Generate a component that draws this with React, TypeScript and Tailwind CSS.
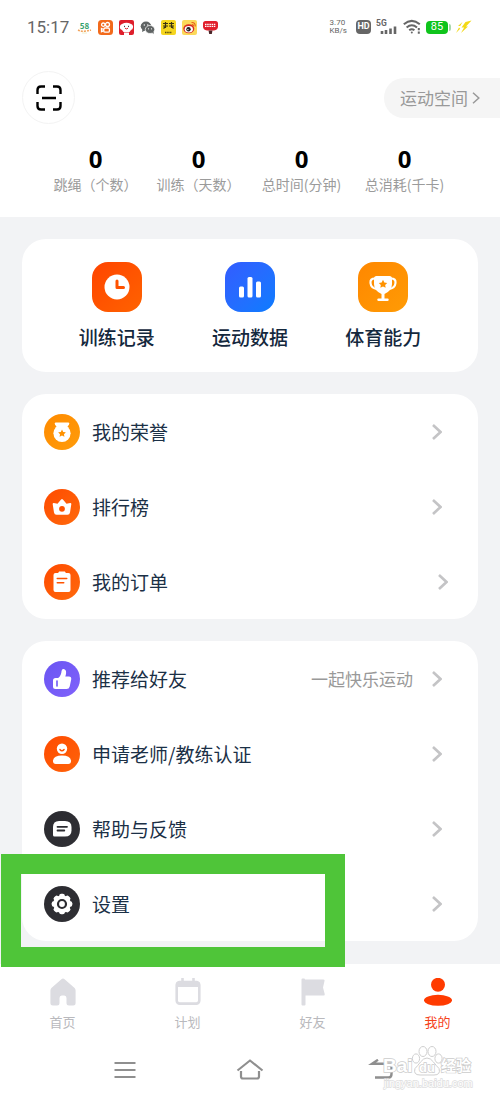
import type { ReactNode } from "react";

type RowItem = {
  label: string;
  icon: ReactNode;
  note?: string;
  inset?: string;
  marked?: boolean;
};

function Chevron() {
  return (
    <svg className="h-[18px] w-[11px] shrink-0" viewBox="0 0 11 18" fill="none" stroke="#c4c4c6" strokeWidth="2.6" aria-hidden="true">
      <path d="M2 2 9.500 9l-7.500 7" />
    </svg>
  );
}

function Disc({ from, to, id, children }: { from: string; to: string; id: string; children: ReactNode }) {
  return (
    <svg className="size-9 shrink-0" viewBox="0 0 36 36" aria-hidden="true">
      <defs>
        <linearGradient id={id} x1="0" y1="0" x2="1" y2="1">
          <stop offset="0" stopColor={from} />
          <stop offset="1" stopColor={to} />
        </linearGradient>
      </defs>
      <circle cx="18" cy="18" r="18" fill={`url(#${id})`} />
      {children}
    </svg>
  );
}

const STAR = "M0-3.5 1.1-1.2 3.5-.9 1.8.8 2.2 3.2 0 2.1-2.2 3.2-1.8.8-3.5-.9-1.1-1.2Z";

const groupOne: RowItem[] = [
  {
    label: "我的荣誉",
    icon: (
      <Disc id="honor" from="#ff8a00" to="#ff9c0a">
        <path d="M11.500 8.500h13q1.500.5.500 2l-2 3h-10l-2-3q-1-1.500.5-2Z" fill="#fff" />
        <circle cx="18" cy="19.300" r="8.600" fill="#fff" />
        <path d={STAR} transform="translate(18 19.300) scale(1.100)" fill="#ff9200" />
      </Disc>
    ),
  },
  {
    label: "排行榜",
    icon: (
      <Disc id="rank" from="#ff4a00" to="#ff6a0c">
        <path d="m9.800 14 3.700.8 3.600-4.400q.9-1 1.800 0l3.600 4.400 3.700-.8q1.300-.1 1.100 1.200l-1.300 8.300q-.4 2.300-2.500 2.300h-11q-2.100 0-2.500-2.300l-1.300-8.300q-.2-1.300 1.100-1.200Z" fill="#fff" />
        <circle cx="18" cy="19.800" r="2.900" fill="#ff5200" />
      </Disc>
    ),
  },
  {
    label: "我的订单",
    inset: "pr-[30px]",
    icon: (
      <Disc id="order" from="#ff4a00" to="#ff6a0c">
        <path d="M11.500 9h2.600l1-1.600h5.800l1 1.600h2.600q2 0 2 2v15q0 2-2 2h-13q-2 0-2-2V11q0-2 2-2Z" fill="#fff" />
        <path d="M13.300 14.500h9.400M13.300 18.700h6.400" stroke="#ff5200" strokeWidth="1.600" strokeLinecap="round" />
      </Disc>
    ),
  },
];

const groupTwo: RowItem[] = [
  {
    label: "推荐给好友",
    note: "一起快乐运动",
    icon: (
      <Disc id="recommend" from="#6a55f2" to="#8062fb">
        <path d="M11.500 17h2.700q3.100-2.500 3.300-6.800.2-2.400 2.200-2.200 2.600.4 2.400 3.800-.1 2-.8 3.700h3.500q2.900.2 2.400 3l-1.500 7q-.6 2.500-3.200 2.500h-11Q9 28 9 25.500v-6Q9 17 11.500 17Z" fill="#fff" />
        <path d="M13 20v5" stroke="#7058f5" strokeWidth="1.600" strokeLinecap="round" />
      </Disc>
    ),
  },
  {
    label: "申请老师/教练认证",
    icon: (
      <Disc id="coach" from="#ff4a00" to="#ff640a">
        <circle cx="18" cy="12.800" r="5.200" fill="#fff" />
        <path d="M15.900 13.500q2 2.600 4.200 0" stroke="#ff5200" strokeWidth="1.400" strokeLinecap="round" fill="none" />
        <path d="M9 24.600q.8-5.100 9-5.100t9 5.100q.2 3.400-2.600 3.400H11.600Q8.800 28 9 24.600Z" fill="#fff" />
      </Disc>
    ),
  },
  {
    label: "帮助与反馈",
    icon: (
      <Disc id="feedback" from="#2b2b30" to="#2f2f34">
        <path d="M15 10h6q6.500 0 6.500 6v3.500q0 6-6.500 6H10.500Q9 25.500 9 24v-8q0-6 6-6Z" fill="#fff" />
        <path d="M13.500 15.800h9.500M13.500 19.500h6.800" stroke="#2b2b30" strokeWidth="1.800" strokeLinecap="round" />
      </Disc>
    ),
  },
  {
    label: "设置",
    marked: true,
    icon: (
      <Disc id="settings" from="#2b2b30" to="#2f2f34">
        <g fill="#fff">
          <circle cx="18" cy="18" r="8.800" />
          {[0, 45, 90, 135, 180, 225, 270, 315].map((a) => (
            <rect key={a} x="15.200" y="7.700" width="5.600" height="5" rx="2" transform={`rotate(${a} 18 18)`} />
          ))}
        </g>
        <circle cx="18" cy="18" r="4" fill="none" stroke="#2b2b30" strokeWidth="2.200" />
      </Disc>
    ),
  },
];

function Group({ items }: { items: RowItem[] }) {
  return (
    <ul className="rounded-3xl bg-white">
      {items.map((item) => (
        <li key={item.label} className="relative">
          <button type="button" className={`flex h-[75px] w-full items-center pl-[22px] text-left ${item.inset ?? "pr-9"}`}>
            {item.icon}
            <span className="ml-3 flex-1 text-[19px] leading-7 text-[#1b3046]">{item.label}</span>
            {item.note && <span className="mr-[18px] text-[17px] leading-6 text-[#999]">{item.note}</span>}
            <Chevron />
          </button>
          {item.marked && (
            <span className="pointer-events-none absolute -top-3 -left-[21px] z-10 h-[113px] w-[344px] border-20 border-[#4fc539]" />
          )}
        </li>
      ))}
    </ul>
  );
}

function AppIcons() {
  return (
    <div className="flex items-center gap-1.5" aria-hidden="true">
      <svg className="size-[15px]" viewBox="0 0 15 15">
        <text x="7.500" y="8.500" textAnchor="middle" fontSize="8" fontWeight="700" fill="#32a06b">58</text>
        <path d="M1 10q3 1.500 6.500 1.200T14 10" stroke="#f2a35b" strokeWidth="1.400" fill="none" strokeDasharray="2 1" />
        <path d="M5 13h5" stroke="#eec" strokeWidth="1" />
      </svg>
      <svg className="size-[15px]" viewBox="0 0 15 15">
        <rect width="15" height="15" rx="3.500" fill="#f26a1b" />
        <g fill="none" stroke="#fff" strokeWidth="1.300">
          <circle cx="5.300" cy="4.700" r="1.700" />
          <circle cx="9.500" cy="4.500" r="2" />
          <rect x="5.800" y="8" width="5.600" height="4.200" rx="1.300" />
          <path d="m5.800 9.500-2.300-1v3.200l2.300-1" />
        </g>
      </svg>
      <svg className="size-[15px]" viewBox="0 0 15 15">
        <rect width="15" height="15" rx="2" fill="#de1f2c" />
        <path d="M3 4q4.500-2.500 9 0 2.500 1 2 3.500-.3 2-2 2.500L10.500 12h-6L3 10Q.700 9.500.800 7 .900 4.500 3 4Z" fill="#fff" />
        <path d="M5.500 5.800v1.300M9.500 5.800v1.300" stroke="#444" />
        <path d="M6 8.200q1.500 1.400 3 0" stroke="#de1f2c" fill="none" />
        <path d="M5 12.500h5V15H5Z" fill="#fff" />
      </svg>
      <svg className="size-[15px]" viewBox="0 0 15 15">
        <ellipse cx="6" cy="6.200" rx="5.300" ry="4.600" fill="#606464" />
        <path d="m2.500 9-.5 3 3-1.500Z" fill="#606464" />
        <ellipse cx="10" cy="9.500" rx="4.700" ry="4" fill="#606464" stroke="#fff" strokeWidth=".7" />
        <path d="m12 12.500 1.500 1.800.2-2.800Z" fill="#606464" />
        <g fill="#fff">
          <circle cx="4.300" cy="5" r=".7" />
          <circle cx="7.800" cy="5" r=".7" />
          <circle cx="8.500" cy="8.800" r=".6" />
          <circle cx="11.500" cy="8.800" r=".6" />
        </g>
      </svg>
      <svg className="size-[15px]" viewBox="0 0 15 15">
        <rect width="15" height="15" rx="2" fill="#f5d51f" />
        <path d="M2 3.500h5M8 3.500h5M4.500 2v6M10.500 2v6M2 6h5M8 6h5M2.500 8.500 4 7M12.500 8.500 11 7" stroke="#3a3210" strokeWidth="1.200" />
        <path d="M4 12.500h7" stroke="#5b4e10" strokeWidth="1.600" strokeDasharray="1.500 .7" />
      </svg>
      <svg className="size-[15px]" viewBox="0 0 15 15">
        <rect width="15" height="15" rx="2" fill="#fbd95b" />
        <ellipse cx="6.800" cy="8.800" rx="5.500" ry="4.500" fill="#d92b23" />
        <ellipse cx="6.800" cy="9.200" rx="4.100" ry="3.200" fill="#fff" />
        <circle cx="6.500" cy="9.300" r="2.200" fill="#222" />
        <circle cx="5.900" cy="9.600" r=".7" fill="#fff" />
        <path d="M9.500 2.500q4-.3 3.700 4M9.800 4.600q1.800-.2 1.600 1.700" stroke="#e8631c" strokeWidth="1.200" fill="none" />
      </svg>
      <svg className="size-[15px]" viewBox="0 0 15 15">
        <path d="M2.500 1h10Q15 1 15 3.500v3Q15 10 11 10.500H4Q0 10 0 6.500v-3Q0 1 2.500 1Z" fill="#e1202d" />
        <path d="M2 4.300h11M2 6.300h11" stroke="#fff" strokeWidth="1.200" strokeDasharray="1.500 .7" />
        <path d="M5.500 10.500h4L8.800 14H6.200Z" fill="#4b2528" />
      </svg>
    </div>
  );
}

function StatusBar() {
  return (
    <div className="flex h-[54px] items-center pr-7 pl-[27px] text-[#666]">
      <span className="mr-2 w-[42px] font-['Roboto','Inter',sans-serif] text-[17px] leading-5">15:17</span>
      <AppIcons />
      <div className="ml-auto flex items-center gap-[5px]">
        <span className="mr-1 font-['Roboto','Inter',sans-serif] text-[8px] leading-2">
          3.70
          <br />
          KB/s
        </span>
        <span className="flex h-[14px] w-[15px] items-center justify-center rounded bg-[#666] font-['Roboto',sans-serif] text-[9px] font-bold text-white">HD</span>
        <svg className="h-4 w-[22px]" viewBox="0 0 22 16" aria-label="5G">
          <text x="0" y="6.800" fontSize="8.500" fontWeight="700" fontFamily="Roboto, sans-serif" fill="#666">5G</text>
          <path d="M6 15v-3M10 15v-4M14.500 15V9.500M19 15V7.500" stroke="#666" strokeWidth="2.600" />
        </svg>
        <svg className="h-4 w-[18px]" viewBox="0 0 18 16" fill="none" stroke="#666" strokeWidth="2" aria-hidden="true">
          <path d="M.8 5.300q8-6.800 16 0M3.600 8.500q5.200-4.400 10.400 0M6.200 11.300q2.600-2.100 5.200 0" />
          <circle cx="8.800" cy="13.600" r="1" fill="#666" stroke="none" />
          <path d="M15.800 9v2.200M15.800 12.500v2.200" />
        </svg>
        <span className="flex items-center gap-px">
          <span className="flex h-[13px] w-[22px] items-center justify-center rounded bg-[#0fc41c] font-['Roboto',sans-serif] text-[11px] leading-3 text-white">85</span>
          <span className="h-[7px] w-0.5 rounded-r bg-[#a9d9ab]" />
        </span>
        <svg className="h-[14px] w-4" viewBox="0 0 16 14" aria-hidden="true">
          <path d="M15.500.5 9.500 2 5.500 7.500h2.600L5 13l7-6.500h-2ZM6.500 2 2 6h2.200ZM3 7.500 0 13l4.200-4.200Z" fill="#f3d916" />
        </svg>
      </div>
    </div>
  );
}

const stats = ["跳绳（个数）", "训练（天数）", "总时间(分钟)", "总消耗(千卡)"];

const shortcuts = [
  {
    label: "训练记录",
    tile: "bg-linear-to-br from-[#ff4300] to-[#ff6200]",
    icon: (
      <>
        <circle cx="25" cy="25" r="12.500" fill="#fff" />
        <path d="M25 19v6.500h6.500" stroke="#ff5200" strokeWidth="3" strokeLinecap="round" strokeLinejoin="round" fill="none" />
      </>
    ),
  },
  {
    label: "运动数据",
    tile: "bg-linear-to-br from-[#325cff] to-[#087cff]",
    icon: (
      <g fill="#fff">
        <rect x="14" y="24.500" width="5" height="11" rx="1.500" />
        <rect x="22.500" y="15" width="5" height="20.500" rx="1.500" />
        <rect x="31" y="19.500" width="5" height="16" rx="1.500" />
      </g>
    ),
  },
  {
    label: "体育能力",
    tile: "bg-linear-to-br from-[#ff8700] to-[#ff9b05]",
    icon: (
      <>
        <path d="M17 16.500q-5 0-4.500 4.500.5 5 6 6M33 16.500q5 0 4.500 4.500-.5 5-6 6" fill="none" stroke="#fff" strokeWidth="2.200" />
        <path d="M18.500 14h13q2.500 0 2.500 2.500V22q0 6.500-7.500 10v5h-3v-5Q16 28.500 16 22v-5.500q0-2.500 2.500-2.500Z" fill="#fff" />
        <path d="M20.500 37.800h9" stroke="#fff" strokeWidth="2.400" strokeLinecap="round" />
        <path d={STAR} transform="translate(25 22) scale(1.200)" fill="#ff9200" />
      </>
    ),
  },
];

const tabs = [
  {
    label: "首页",
    color: "text-[#b9b9bd]",
    icon: <path d="M12.400 1.300q1.600-1.400 3.200 0l10 8.700q1 1 1 2.500V25q0 2.500-2.500 2.500H20q-2.500 0-2.500-2.500v-5q0-2.500-2.300-2.500h-2.400q-2.300 0-2.300 2.500v5q0 2.500-2.500 2.500H3.900q-2.500 0-2.500-2.500V12.500q0-1.500 1-2.500Z" fill="#dcdce1" />,
  },
  {
    label: "计划",
    color: "text-[#b9b9bd]",
    icon: (
      <>
        <rect x="2.700" y="4" width="22.600" height="21.600" rx="3" fill="none" stroke="#dcdce1" strokeWidth="2.600" />
        <path d="M2.500 4h23v5h-23Z" fill="#dcdce1" />
        <path d="M8.500 0v6M19.500 0v6" stroke="#dcdce1" strokeWidth="2.600" />
      </>
    ),
  },
  {
    label: "好友",
    color: "text-[#b9b9bd]",
    icon: <path d="M2.500 1.500q0-1 1-1h1.500q1 0 1 1h18.500q1.500.2 1 1.500L24 9.500l1.700 6.500q.4 1.500-1 1.500H6.500v9q0 1-1 1h-2q-1 0-1-1Z" fill="#dcdce1" />,
  },
  {
    label: "我的",
    color: "text-[#f5421a]",
    icon: (
      <g fill="#ff3b00">
        <circle cx="14" cy="6.800" r="7" />
        <ellipse cx="14" cy="22.300" rx="14" ry="5.500" />
      </g>
    ),
  },
];

function Watermark() {
  return (
    <svg className="pointer-events-none absolute right-6 bottom-2.5 h-[50px] w-[96px]" viewBox="0 0 96 50" aria-hidden="true">
      <g fill="#fff" stroke="#cfcfcf" strokeWidth="1">
        <ellipse cx="36" cy="18.500" rx="3.600" ry="4.600" />
        <ellipse cx="43" cy="11.500" rx="4" ry="5" />
        <ellipse cx="52" cy="11.500" rx="4" ry="5" />
        <ellipse cx="58.500" cy="18.500" rx="3.600" ry="4.600" />
        <path d="M47 18q3.500 0 6.500 4t5.500 6.500q2 6.500-5 6.500H40q-7 0-5-6.500 2.500-2.500 5.500-6.500t6.500-4Z" />
      </g>
      <g fontFamily="'Liberation Sans', sans-serif" fontWeight="700" fill="#fff" stroke="#cccccc" strokeWidth="1.400" paintOrder="stroke">
        <text x="3" y="32" fontSize="19">Bai</text>
        <text x="47" y="32" fontSize="13" textAnchor="middle">du</text>
        <text x="61" y="31" fontSize="15" fontFamily="'Noto Sans CJK SC', sans-serif">经验</text>
        <text x="4" y="47" fontSize="11" fontWeight="400" stroke="#dddddd">jingyan.baidu.com</text>
      </g>
    </svg>
  );
}

export default function App() {
  return (
    <div className="flex min-h-screen flex-col bg-[#f2f3f5] font-['Noto_Sans_CJK_SC',sans-serif]">
      <header className="bg-white pb-[23px]">
        <StatusBar />
        <div className="mt-[17px] flex items-center justify-between pl-[22px]">
          <button type="button" aria-label="扫一扫" className="flex size-[53px] items-center justify-center rounded-full border border-[#f3f3f3] bg-white">
            <svg className="size-[26px]" viewBox="0 0 26 26" fill="none" stroke="#000" strokeWidth="2.400" aria-hidden="true">
              <path d="M1.500 9V5q0-3.500 3.500-3.500h4M17 1.500h4q3.500 0 3.500 3.500v4M24.500 17v4q0 3.500-3.500 3.500h-4M9 24.500H5q-3.500 0-3.500-3.500v-4M6 13h14" />
            </svg>
          </button>
          <button type="button" className="flex h-10 items-center gap-1 rounded-l-full bg-[#f5f5f5] pr-5 pl-4 text-[17px] leading-6 text-[#999]">
            运动空间
            <svg className="h-3 w-2" viewBox="0 0 8 12" fill="none" stroke="#999" strokeWidth="1.500" aria-hidden="true">
              <path d="m1 .8 5.800 5.200L1 11.200" />
            </svg>
          </button>
        </div>
        <dl className="mt-[21px] grid grid-cols-4 px-11 text-center">
          {stats.map((label) => (
            <div key={label} className="flex flex-col-reverse">
              <dt className="text-[14px] leading-5 whitespace-nowrap text-[#9b9b9b]">{label}</dt>
              <dd className="mb-0.5 font-['Noto_Sans','Open_Sans',sans-serif] text-2xl leading-[27px] font-bold text-black">0</dd>
            </div>
          ))}
        </dl>
      </header>

      <main className="flex flex-1 flex-col gap-[22px] px-[22px] py-[22px]">
        <section className="grid grid-cols-3 rounded-3xl bg-white px-7 pt-[23px] pb-[21px]">
          {shortcuts.map((s) => (
            <button key={s.label} type="button" className="flex flex-col items-center">
              <span className={`size-[50px] rounded-2xl ${s.tile}`}>
                <svg className="size-[50px]" viewBox="0 0 50 50" aria-hidden="true">
                  {s.icon}
                </svg>
              </span>
              <span className="mt-[11px] text-[19px] leading-7 font-medium text-[#14283d]">{s.label}</span>
            </button>
          ))}
        </section>
        <Group items={groupOne} />
        <Group items={groupTwo} />
      </main>

      <footer className="relative bg-white">
        <nav className="grid h-[72px] grid-cols-4 pt-3.5">
          {tabs.map((t) => (
            <a key={t.label} href="#" className={`flex flex-col items-center text-[13px] leading-5 ${t.color}`}>
              <svg className="mb-1.5 size-7" viewBox="0 0 28 28" aria-hidden="true">
                {t.icon}
              </svg>
              {t.label}
            </a>
          ))}
        </nav>
        <div className="grid h-16 grid-cols-3 items-center px-[62px] pt-1">
          <button type="button" aria-label="菜单" className="flex justify-center">
            <svg className="h-[22px] w-[22px]" viewBox="0 0 22 22" stroke="#8f8f8f" strokeWidth="2.200" aria-hidden="true">
              <path d="M.5 4h21M.5 11h21M.5 18h21" />
            </svg>
          </button>
          <button type="button" aria-label="主页" className="flex justify-center">
            <svg className="h-[22px] w-7" viewBox="0 0 28 22" fill="none" stroke="#8f8f8f" strokeWidth="2.200" strokeLinejoin="round" aria-hidden="true">
              <path d="M1.500 11.500 14 1.500l12.500 10M5 12v5.500q0 2 2 2h14q2 0 2-2V12" />
            </svg>
          </button>
          <button type="button" aria-label="返回" className="flex justify-center">
            <svg className="h-[22px] w-9" viewBox="0 0 36 22" fill="none" stroke="#8f8f8f" strokeWidth="2.400" aria-hidden="true">
              <path d="m21 .8-6 4h19.500V15q0 3.500-3 3.500H18" />
            </svg>
          </button>
        </div>
        <Watermark />
      </footer>
    </div>
  );
}
